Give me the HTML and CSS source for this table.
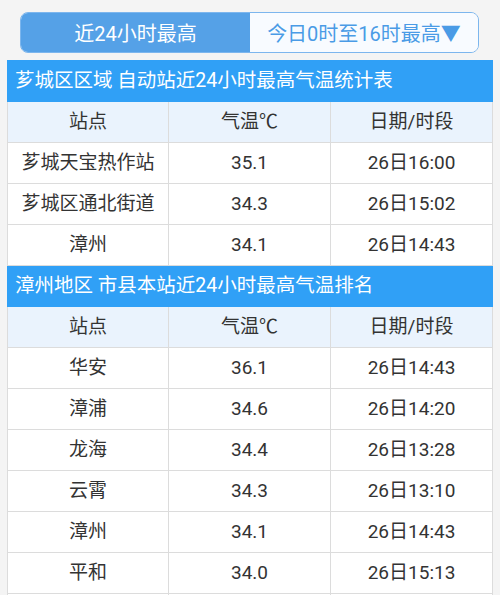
FILE: index.html
```html
<!DOCTYPE html>
<html lang="zh">
<head>
<meta charset="utf-8">
<link rel="stylesheet" href="styles.css">
</head>
<body>
<div class="tabs">
  <div class="tab active">近24小时最高</div>
  <div class="tab">今日0时至16时最高▼</div>
</div>
<table class="grid">
  <colgroup><col class="c1"><col class="c2"><col class="c3"></colgroup>
  <tr><td colspan="3" class="title">芗城区区域 自动站近24小时最高气温统计表</td></tr>
  <tr class="head"><td>站点</td><td>气温℃</td><td>日期/时段</td></tr>
  <tr><td>芗城天宝热作站</td><td>35.1</td><td>26日16:00</td></tr>
  <tr><td>芗城区通北街道</td><td>34.3</td><td>26日15:02</td></tr>
  <tr><td>漳州</td><td>34.1</td><td>26日14:43</td></tr>
  <tr><td colspan="3" class="title">漳州地区 市县本站近24小时最高气温排名</td></tr>
  <tr class="head"><td>站点</td><td>气温℃</td><td>日期/时段</td></tr>
  <tr><td>华安</td><td>36.1</td><td>26日14:43</td></tr>
  <tr><td>漳浦</td><td>34.6</td><td>26日14:20</td></tr>
  <tr><td>龙海</td><td>34.4</td><td>26日13:28</td></tr>
  <tr><td>云霄</td><td>34.3</td><td>26日13:10</td></tr>
  <tr><td>漳州</td><td>34.1</td><td>26日14:43</td></tr>
  <tr><td>平和</td><td>34.0</td><td>26日15:13</td></tr>
  <tr><td></td><td></td><td></td></tr>
</table>
</body>
</html>
```
FILE: styles.css
```css
html, body {
  margin: 0;
  padding: 0;
  background: #f4f4f4;
  font-family: Roboto, "Noto Sans CJK SC", sans-serif;
  color: #333;
  overflow: hidden;
}
.tabs {
  display: flex;
  margin: 12px 21px 0 20px;
  height: 41px;
  border: 1px solid #7cb6ee;
  border-radius: 8px;
  overflow: hidden;
  box-sizing: border-box;
}
.tab {
  flex: 1 1 0;
  display: flex;
  align-items: center;
  justify-content: center;
  font-size: 20px;
  color: #4a9be6;
  background: #f8fbff;
}
.tab.active {
  flex: 0 0 229px;
  background: #55a1e7;
  color: #fff;
}
.grid {
  margin: 7px 0 0 7px;
  width: 485px;
  border-collapse: collapse;
  table-layout: fixed;
  background: #fff;
}
.c1 { width: 161px; }
.c2 { width: 162px; }
.c3 { width: 162px; }
.grid td {
  height: 40px;
  padding: 0;
  border: 1px solid #dcdcdc;
  text-align: center;
  font-size: 19px;
  line-height: 40px;
  white-space: nowrap;
}
.grid td.title {
  background: #30a0f6;
  color: #fff;
  text-align: left;
  padding-left: 7px;
  font-size: 19.5px;
  border-color: #30a0f6;
}
.grid tr.head td {
  background: #eaf3fd;
}
```
